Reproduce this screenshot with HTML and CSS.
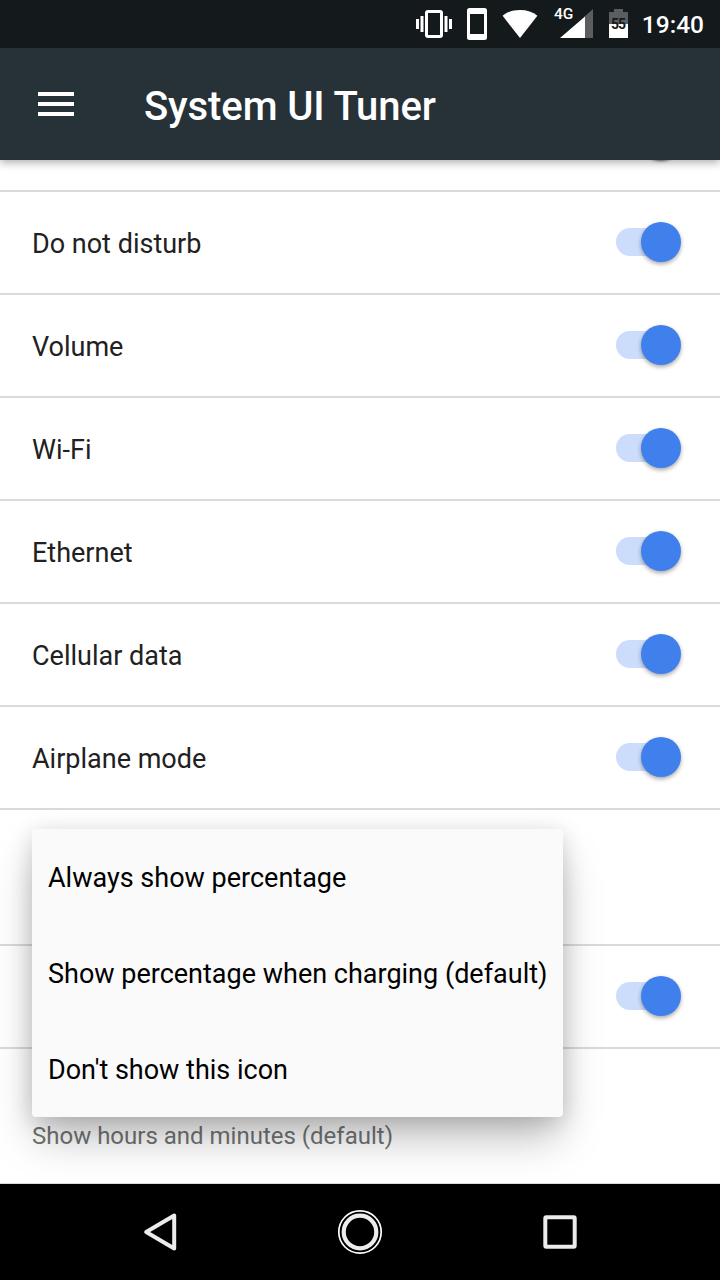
FILE: index.html
```html
<!DOCTYPE html>
<html lang="en">

<head>
    <meta charset="UTF-8">
    <meta name="viewport" content="width=device-width, initial-scale=1.0">
    <title>System UI Tuner</title>
    <link rel="stylesheet" href="styles.css">
</head>

<body>
    <div class="status-bar">
        <svg class="vibrate" width="36" height="28" viewBox="0 0 36 28">
            <rect x="10.5" y="1.5" width="15" height="25" rx="1.5" fill="none" stroke="#fff" stroke-width="3" />
            <path d="M0 9h3v10H0zM4.5 6h3v16h-3zM28.5 6h3v16h-3zM33 9h3v10h-3z" fill="#fff" />
        </svg>
        <svg class="phone" width="20" height="32" viewBox="0 0 20 32">
            <path d="M2.5 0h15A2.5 2.5 0 0 1 20 2.5v27a2.5 2.5 0 0 1-2.5 2.5h-15A2.5 2.5 0 0 1 0 29.5v-27A2.5 2.5 0 0 1 2.5 0zM3 6v20h14V6z" fill="#fff" fill-rule="evenodd" />
        </svg>
        <svg class="wifi" width="36" height="28" viewBox="0 0 36 28">
            <path d="M18 28L.6 5.8C5 2 11 0 18 0s13 2 17.400 5.800z" fill="#fff" />
        </svg>
        <div class="signal">
            <span class="network">4G</span>
            <svg width="33" height="29" viewBox="0 0 33 29">
                <path d="M24 8l9-8v29h-9z" fill="#5b5e60" />
                <path d="M0 29L25 7.5V29z" fill="#fff" />
            </svg>
        </div>
        <div class="battery">
            <svg width="19" height="29" viewBox="0 0 19 29">
                <path d="M5 0h9v3h5v12H0V3h5z" fill="#5b5e60" />
                <path d="M0 15h19v14H0z" fill="#fff" />
            </svg>
            <span class="level">55</span>
        </div>
        <span class="clock">19:40</span>
    </div>

    <header class="toolbar">
        <div class="menu-icon"><i></i><i></i><i></i></div>
        <h1>System UI Tuner</h1>
    </header>

    <main class="list">
        <div class="row"><span></span><div class="switch off"></div></div>
        <div class="row"><span>Do not disturb</span><div class="switch"></div></div>
        <div class="row"><span>Volume</span><div class="switch"></div></div>
        <div class="row"><span>Wi-Fi</span><div class="switch"></div></div>
        <div class="row"><span>Ethernet</span><div class="switch"></div></div>
        <div class="row"><span>Cellular data</span><div class="switch"></div></div>
        <div class="row"><span>Airplane mode</span><div class="switch"></div></div>
        <div class="row tall">
            <ul class="dropdown">
                <li>Always show percentage</li>
                <li>Show percentage when charging (default)</li>
                <li>Don't show this icon</li>
            </ul>
        </div>
        <div class="row"><span></span><div class="switch"></div></div>
        <div class="row tall"><p class="summary">Show hours and minutes (default)</p></div>
    </main>

    <nav class="nav-bar">
        <svg width="48" height="48" viewBox="0 0 48 48">
            <path d="M10.200 24L38.200 7.500v33z" fill="none" stroke="#ececec" stroke-width="4" stroke-linejoin="round" />
        </svg>
        <svg width="48" height="48" viewBox="0 0 48 48">
            <circle cx="24" cy="24" r="21.200" fill="none" stroke="#fff" stroke-width="1.700" />
            <circle cx="24" cy="24" r="16.300" fill="none" stroke="#ececec" stroke-width="4.200" />
        </svg>
        <svg width="48" height="48" viewBox="0 0 48 48">
            <rect x="9.300" y="9.300" width="29.400" height="29.400" rx="1" fill="none" stroke="#ececec" stroke-width="4" />
        </svg>
    </nav>
</body>

</html>
```

FILE: styles.css
```css
* {
    box-sizing: border-box;
}

body {
    display: flex;
    flex-direction: column;
    height: 1280px;
    margin: 0;
    overflow: hidden;
    background-color: #fff;
    color: #212121;
    font-family: Roboto, "Noto Sans", sans-serif;
}

svg {
    display: block;
    flex: none;
}

.status-bar {
    position: relative;
    z-index: 3;
    display: flex;
    flex: none;
    align-items: flex-start;
    height: 48px;
    padding: 0 16px 0 416px;
    background-color: #14191c;
    color: #fff;
}

.vibrate {
    margin-top: 10px;
}

.phone {
    margin: 8px 0 0 15px;
}

.wifi {
    margin: 10px 0 0 15px;
}

.signal {
    position: relative;
    margin: 9px 0 0 22px;
}

.network {
    position: absolute;
    left: -6px;
    top: -4px;
    font-size: 15.5px;
    font-weight: 500;
    line-height: 18px;
}

.battery {
    position: relative;
    margin: 9px 0 0 16px;
}

.level {
    position: absolute;
    left: -1px;
    top: 6px;
    width: 20px;
    color: #14191c;
    font-size: 14px;
    font-weight: 700;
    letter-spacing: -1px;
    line-height: 18px;
    text-align: center;
}

.clock {
    margin-left: auto;
    font-size: 24.5px;
    font-weight: 500;
    line-height: 50px;
}

.toolbar {
    position: relative;
    z-index: 2;
    display: flex;
    flex: none;
    align-items: center;
    height: 112px;
    padding: 0 38px;
    background-color: #263238;
    box-shadow: 0 3px 8px rgba(0, 0, 0, 0.3);
}

.menu-icon {
    display: flex;
    flex-direction: column;
    gap: 6px;
    width: 36px;
}

.menu-icon i {
    height: 4px;
    background-color: #fff;
}

h1 {
    margin: 6px 0 0 70px;
    color: #fff;
    font-size: 40px;
    font-weight: 500;
    letter-spacing: -0.1px;
    line-height: 48px;
}

.list {
    flex: none;
    height: 1095px;
    margin-top: -71px;
}

.row {
    position: relative;
    display: flex;
    align-items: center;
    justify-content: space-between;
    height: 103px;
    padding: 0 39px 0 32px;
    border-bottom: 2px solid #dadada;
    font-size: 27px;
    line-height: 36px;
}

.row > span {
    padding-top: 2px;
}

.tall {
    height: 136px;
}

.switch {
    position: relative;
    width: 65px;
    height: 28px;
    margin-top: -1px;
    border-radius: 14px;
    background: linear-gradient(90deg, #cbddfa 45px, transparent 45px);
}

.switch::after {
    content: "";
    position: absolute;
    right: 0;
    top: -6px;
    width: 40px;
    height: 40px;
    border-radius: 50%;
    background-color: #4080ec;
    box-shadow: 0 2px 4px rgba(0, 0, 0, 0.35);
}

.switch.off::after {
    box-shadow: 0 2px 3px rgba(0, 0, 0, 0.6);
}

.dropdown {
    position: absolute;
    z-index: 1;
    left: 32px;
    top: 19px;
    width: 531px;
    margin: 0;
    padding: 0;
    border-radius: 4px;
    background-color: #fafafa;
    box-shadow: 0 24px 40px -4px rgba(0, 0, 0, 0.26), 0 4px 22px rgba(0, 0, 0, 0.15);
    color: #000;
    list-style: none;
}

.dropdown li {
    height: 96px;
    padding: 1px 16px 0;
    line-height: 96px;
    white-space: nowrap;
}

.summary {
    align-self: flex-end;
    margin: 0 0 31px;
    color: #737373;
    font-size: 24px;
    line-height: 32px;
}

.nav-bar {
    position: relative;
    z-index: 2;
    display: flex;
    flex: none;
    justify-content: space-between;
    align-items: center;
    height: 96px;
    padding: 0 136px;
    background-color: #000;
}
```
